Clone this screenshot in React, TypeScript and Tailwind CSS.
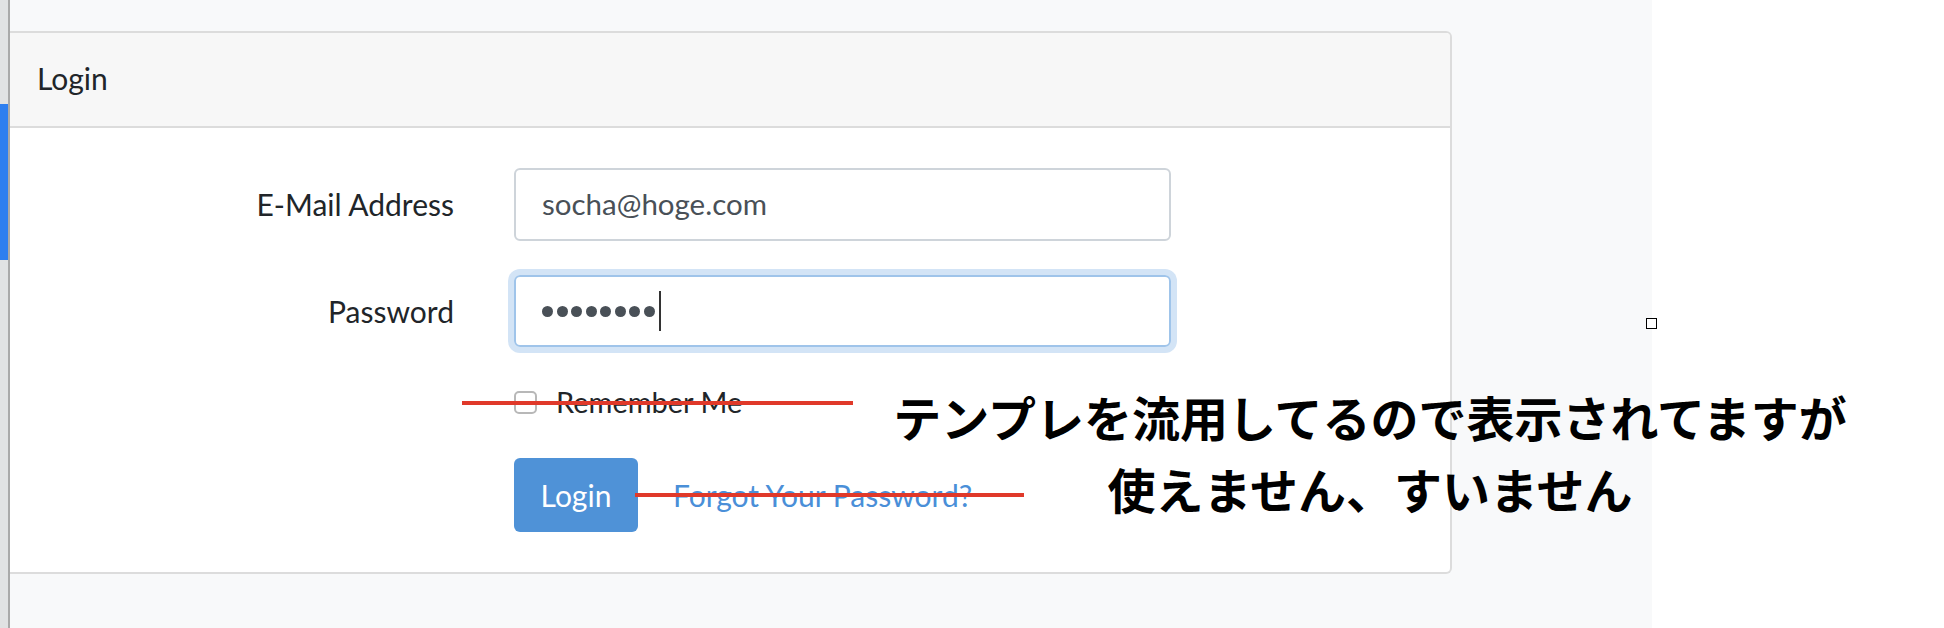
export default function App() {
  return (
    <div className="relative flex h-[628px] w-[1944px] overflow-hidden bg-white font-['Lato',sans-serif] text-[#212529]">
      {/* browser side strip */}
      <div className="flex w-[8px] flex-col bg-[#e1e2e3]">
        <div className="h-[104px]" />
        <div className="h-[156px] bg-[#2e7ff0]" />
      </div>
      <div className="w-[2px] bg-[#a9a9a9]" />

      <main className="w-[1642px] bg-[#f8f9fa] pt-[31px] pr-[200px]">
        <div className="rounded-r-[6px] border-y-2 border-r-2 border-[#dcdcdc] bg-white">
          <div className="flex h-[95px] items-center rounded-tr-[4px] border-b-2 border-[#dcdcdc] bg-[#f7f7f7] pb-[2px] pl-[27px] text-[30px]">
            Login
          </div>

          <div className="pt-[40px] pb-[40px]">
            <div className="flex h-[73px] items-center">
              <label className="w-[444px] text-right text-[30px]">E-Mail Address</label>
              <div className="ml-[60px] flex h-full w-[657px] items-center rounded-[6px] border-2 border-[#ced4da] px-[26px] text-[29.5px] text-[#495057]">
                socha@hoge.com
              </div>
            </div>

            <div className="mt-[34px] flex h-[72px] items-center">
              <label className="w-[444px] text-right text-[30px]">Password</label>
              <div className="ml-[60px] flex h-full w-[657px] items-center gap-[3.5px] rounded-[6px] border-2 border-[#9fc4ea] px-[26px] shadow-[0_0_0_6px_#d3e4f6]">
                {Array.from({ length: 8 }).map((_, i) => (
                  <span key={i} className="h-[11px] w-[11px] rounded-full bg-[#495057]" />
                ))}
                <span className="ml-[1px] h-[40px] w-[2px] bg-[#333]" />
              </div>
            </div>

            <div className="mt-[44px] flex h-[22px] items-center pl-[504px]">
              <span className="h-[23px] w-[23px] rounded-[5px] border-2 border-[#b8b8b8] bg-white" />
              <span className="ml-[19px] text-[29px]">Remember Me</span>
            </div>

            <div className="mt-[45px] flex h-[74px] items-center pl-[504px]">
              <button className="h-full w-[124px] rounded-[6px] bg-[#4f92d7] text-[30px] text-white">
                Login
              </button>
              <a href="#" className="ml-[35px] text-[30px] text-[#4a8fd8]">
                Forgot Your Password?
              </a>
            </div>
          </div>
        </div>
      </main>

      {/* strike-through marks drawn over the form */}
      <div className="absolute top-[401px] left-[462px] h-[4px] w-[391px] bg-[#e0392a]" />
      <div className="absolute top-[493px] left-[635px] h-[4px] w-[389px] bg-[#e0392a]" />

      {/* note */}
      <div className="absolute top-[380px] left-[870px] w-[1000px] text-center font-['Noto_Sans_CJK_JP',sans-serif] text-[48px] leading-[72px] font-bold text-black">
        <p>テンプレを流用してるので表示されてますが</p>
        <p>使えません、すいません</p>
      </div>

      <div className="absolute top-[318px] left-[1646px] h-[11px] w-[11px] border-[1.5px] border-black bg-white" />
    </div>
  )
}
